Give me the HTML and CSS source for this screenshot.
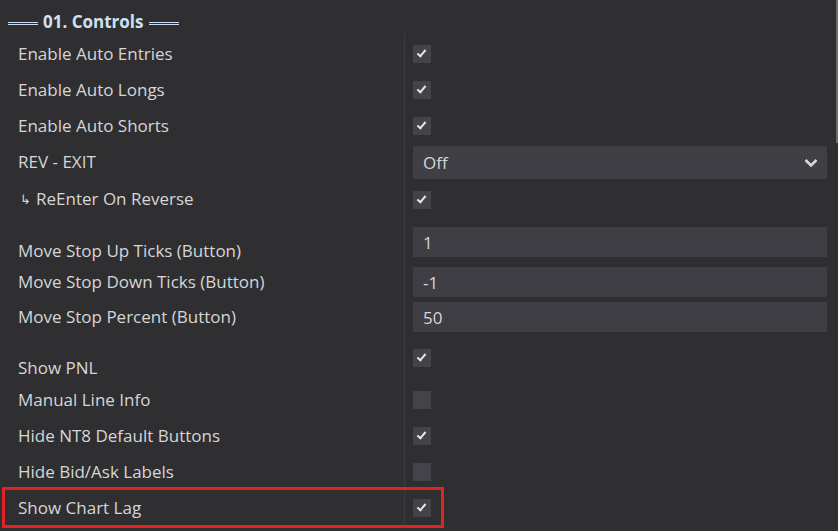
FILE: index.html
```html
<!DOCTYPE html>
<html>
<head>
<meta charset="utf-8">
<link rel="stylesheet" href="styles.css">
</head>
<body>
<div class="panel">
  <div class="header">
    <span class="dline"></span>
    <span class="title">01. Controls</span>
    <span class="dline"></span>
  </div>
  <div class="grid">
    <div class="row spacer"><div class="label"></div><div class="value"></div></div>

    <div class="row h36"><div class="label">Enable Auto Entries</div><div class="value"><span class="cb on"></span></div></div>
    <div class="row h36"><div class="label">Enable Auto Longs</div><div class="value"><span class="cb on"></span></div></div>
    <div class="row h36"><div class="label">Enable Auto Shorts</div><div class="value"><span class="cb on"></span></div></div>
    <div class="row h37"><div class="label">REV - EXIT</div><div class="value"><div class="select"><span>Off</span><svg class="chev" width="14" height="10" viewBox="0 0 14 10"><path d="M1.5 2 L7 7.5 L12.5 2" fill="none" stroke="#d8d8d8" stroke-width="2.6"/></svg></div></div></div>
    <div class="row h37"><div class="label"><span class="arrow">↳</span> ReEnter On Reverse</div><div class="value"><span class="cb on"></span></div></div>

    <div class="row first-input"><div class="label">Move Stop Up Ticks (Button)</div><div class="value"><div class="input">1</div></div></div>
    <div class="row h36"><div class="label">Move Stop Down Ticks (Button)</div><div class="value"><div class="input">-1</div></div></div>
    <div class="row h34"><div class="label">Move Stop Percent (Button)</div><div class="value"><div class="input">50</div></div></div>

    <div class="row first-check"><div class="label">Show PNL</div><div class="value"><span class="cb on"></span></div></div>
    <div class="row h36"><div class="label">Manual Line Info</div><div class="value"><span class="cb"></span></div></div>
    <div class="row h36"><div class="label">Hide NT8 Default Buttons</div><div class="value"><span class="cb on"></span></div></div>
    <div class="row h36"><div class="label">Hide Bid/Ask Labels</div><div class="value"><span class="cb"></span></div></div>
    <div class="row h36 last"><div class="label">Show Chart Lag</div><div class="value"><span class="cb on"></span></div><div class="highlight"></div></div>
  </div>
  <div class="scrollbar"></div>
</div>
</body>
</html>
```
FILE: styles.css
```css
html, body {
  margin: 0;
  padding: 0;
  background: #2f2f32;
  width: 838px;
  height: 531px;
  overflow: hidden;
}
.panel {
  position: relative;
  width: 838px;
  height: 531px;
  font-family: "Open Sans", "Noto Sans", sans-serif;
  color: #d6d6d6;
}
.header {
  display: flex;
  align-items: center;
  height: 33px;
  padding-left: 8px;
  gap: 5px;
  padding-top: 10px;
  box-sizing: border-box;
}
.dline {
  display: block;
  width: 30px;
  height: 1px;
  border-top: 1px solid #c9dcf2;
  border-bottom: 1px solid #c9dcf2;
  margin-top: 3px;
}
.title {
  font-weight: 700;
  font-size: 17px;
  color: #cfe0f5;
  letter-spacing: 0;
}
.grid {
  display: flex;
  flex-direction: column;
}
.row {
  display: grid;
  grid-template-columns: 404px 1fr;
  position: relative;
}
.label {
  display: flex;
  align-items: center;
  padding-left: 18px;
  padding-bottom: 1px;
  font-size: 17px;
  line-height: 22px;
  color: #d6d6d6;
  white-space: nowrap;
}
.value {
  display: flex;
  align-items: center;
  border-left: 1px solid #3b3b3f;
  padding-left: 8px;
  padding-right: 11px;
}
.spacer { height: 3px; }
.h34 { height: 34px; }
.h36 { height: 36px; }
.h37 { height: 37px; }
.first-input { height: 46px; }
.first-input .value { align-items: flex-start; padding-top: 9px; }
.first-input .label { align-items: flex-end; padding-bottom: 2px; }
.first-check { height: 48px; }
.first-check .value { align-items: flex-start; padding-top: 15px; }
.first-check .label { align-items: flex-end; padding-bottom: 3px; }

.cb {
  display: block;
  width: 18px;
  height: 18px;
  background: #444349;
  position: relative;
}
.cb.on::after {
  content: "";
  position: absolute;
  left: 6px;
  top: 3px;
  width: 3px;
  height: 7px;
  border-right: 2px solid #e6e6e6;
  border-bottom: 2px solid #e6e6e6;
  transform: rotate(40deg);
  transform-origin: center;
}
.select {
  flex: 1;
  height: 33px;
  background: #403f46;
  display: flex;
  align-items: center;
  justify-content: space-between;
  padding: 0 9px 0 10px;
  font-size: 17px;
  color: #d6d6d6;
}
.chev { display: block; }
.input {
  flex: 1;
  height: 30px;
  background: #3f3e45;
  display: flex;
  align-items: center;
  padding-left: 10px;
  font-size: 17px;
  color: #d6d6d6;
}
.arrow {
  font-size: 13px;
  margin-left: 2px;
  margin-right: 5px;
}
.highlight {
  position: absolute;
  left: 2px;
  top: -3px;
  width: 442px;
  height: 41px;
  box-sizing: border-box;
  border: 3px solid #e32222;
  pointer-events: none;
}
.scrollbar {
  position: absolute;
  right: 0;
  top: 0;
  width: 2px;
  height: 143px;
  background: #6b6b6d;
}
```
